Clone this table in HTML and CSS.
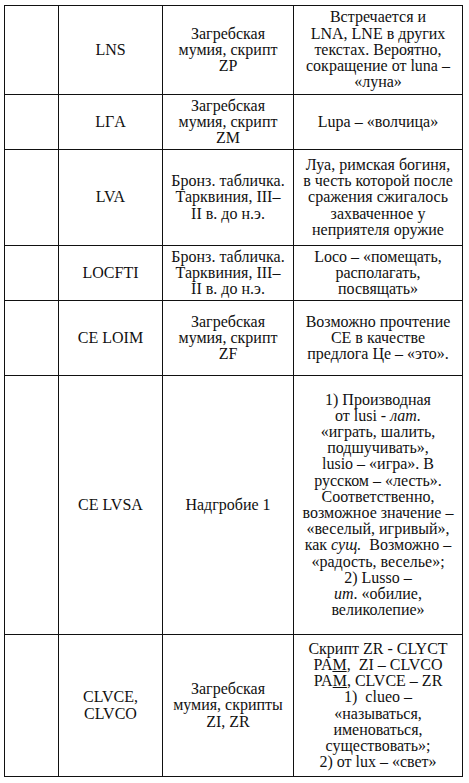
FILE: index.html
```html
<!DOCTYPE html>
<html lang="ru">
<head>
<meta charset="utf-8">
<link rel="stylesheet" href="styles.css">
</head>
<body>
<table class="words">
  <colgroup>
    <col class="c-num">
    <col class="c-word">
    <col class="c-src">
    <col class="c-mean">
  </colgroup>
  <tbody>
    <tr class="r1">
      <td></td>
      <td>LNS</td>
      <td>Загребская<br>мумия, скрипт<br>ZP</td>
      <td>Встречается и<br>LNA, LNE в других<br>текстах. Вероятно,<br>сокращение от luna –<br>«луна»</td>
    </tr>
    <tr class="r2">
      <td></td>
      <td>LГA</td>
      <td>Загребская<br>мумия, скрипт<br>ZM</td>
      <td>Lupa – «волчица»</td>
    </tr>
    <tr class="r3">
      <td></td>
      <td>LVA</td>
      <td>Бронз. табличка.<br>Тарквиния, III–<br>II в. до н.э.</td>
      <td>Луа, римская богиня,<br>в честь которой после<br>сражения сжигалось<br>захваченное у<br>неприятеля оружие</td>
    </tr>
    <tr class="r4">
      <td></td>
      <td>LOCFTI</td>
      <td>Бронз. табличка.<br>Тарквиния, III–<br>II в. до н.э.</td>
      <td>Loco – «помещать,<br>располагать,<br>посвящать»</td>
    </tr>
    <tr class="r5">
      <td></td>
      <td>CE LOIM</td>
      <td>Загребская<br>мумия, скрипт<br>ZF</td>
      <td>Возможно прочтение<br>CE в качестве<br>предлога Це – «это».</td>
    </tr>
    <tr class="r6">
      <td></td>
      <td>CE LVSA</td>
      <td>Надгробие 1</td>
      <td>1) Производная<br>от lusi - <i>лат.</i><br>«играть, шалить,<br>подшучивать»,<br>lusio – «игра». В<br>русском – «лесть».<br>Соответственно,<br>возможное значение –<br>«веселый, игривый»,<br>как <i>сущ.</i>&nbsp; Возможно –<br>«радость, веселье»;<br>2) Lusso –<br><i>ит</i>. «обилие,<br>великолепие»</td>
    </tr>
    <tr class="r7">
      <td></td>
      <td>CLVCE,<br>CLVCO</td>
      <td>Загребская<br>мумия, скрипты<br>ZI, ZR</td>
      <td>Скрипт ZR - CLYCT<br>PA<u>M</u>,&nbsp; ZI – CLVCO<br>PA<u>M</u>, CLVCE – ZR<br>1)&nbsp; clueo –<br>«называться,<br>именоваться,<br>существовать»;<br>2) от lux – «свет»</td>
    </tr>
  </tbody>
</table>
</body>
</html>
```

FILE: styles.css
```css
html, body {
  background: #ffffff;
}
body {
  margin: 0;
  padding: 5px 0 0 4px;
  font-family: "Liberation Serif", "Times New Roman", serif;
  font-size: 16px;
  line-height: 16.2px;
  color: #111111;
}
.words {
  border-collapse: collapse;
  table-layout: fixed;
  width: 458px;
}
.c-num { width: 54px; }
.c-word { width: 104px; }
.c-src { width: 131px; }
.c-mean { width: 169px; }
.words td {
  border: 1px solid #111111;
  padding: 0;
  text-align: center;
  vertical-align: middle;
  white-space: nowrap;
}
.r1 { height: 89px; }
.r2 { height: 55px; }
.r3 { height: 96px; }
.r4 { height: 55px; }
.r5 { height: 75px; }
.r6 { height: 259px; }
.r7 { height: 142px; }
```
